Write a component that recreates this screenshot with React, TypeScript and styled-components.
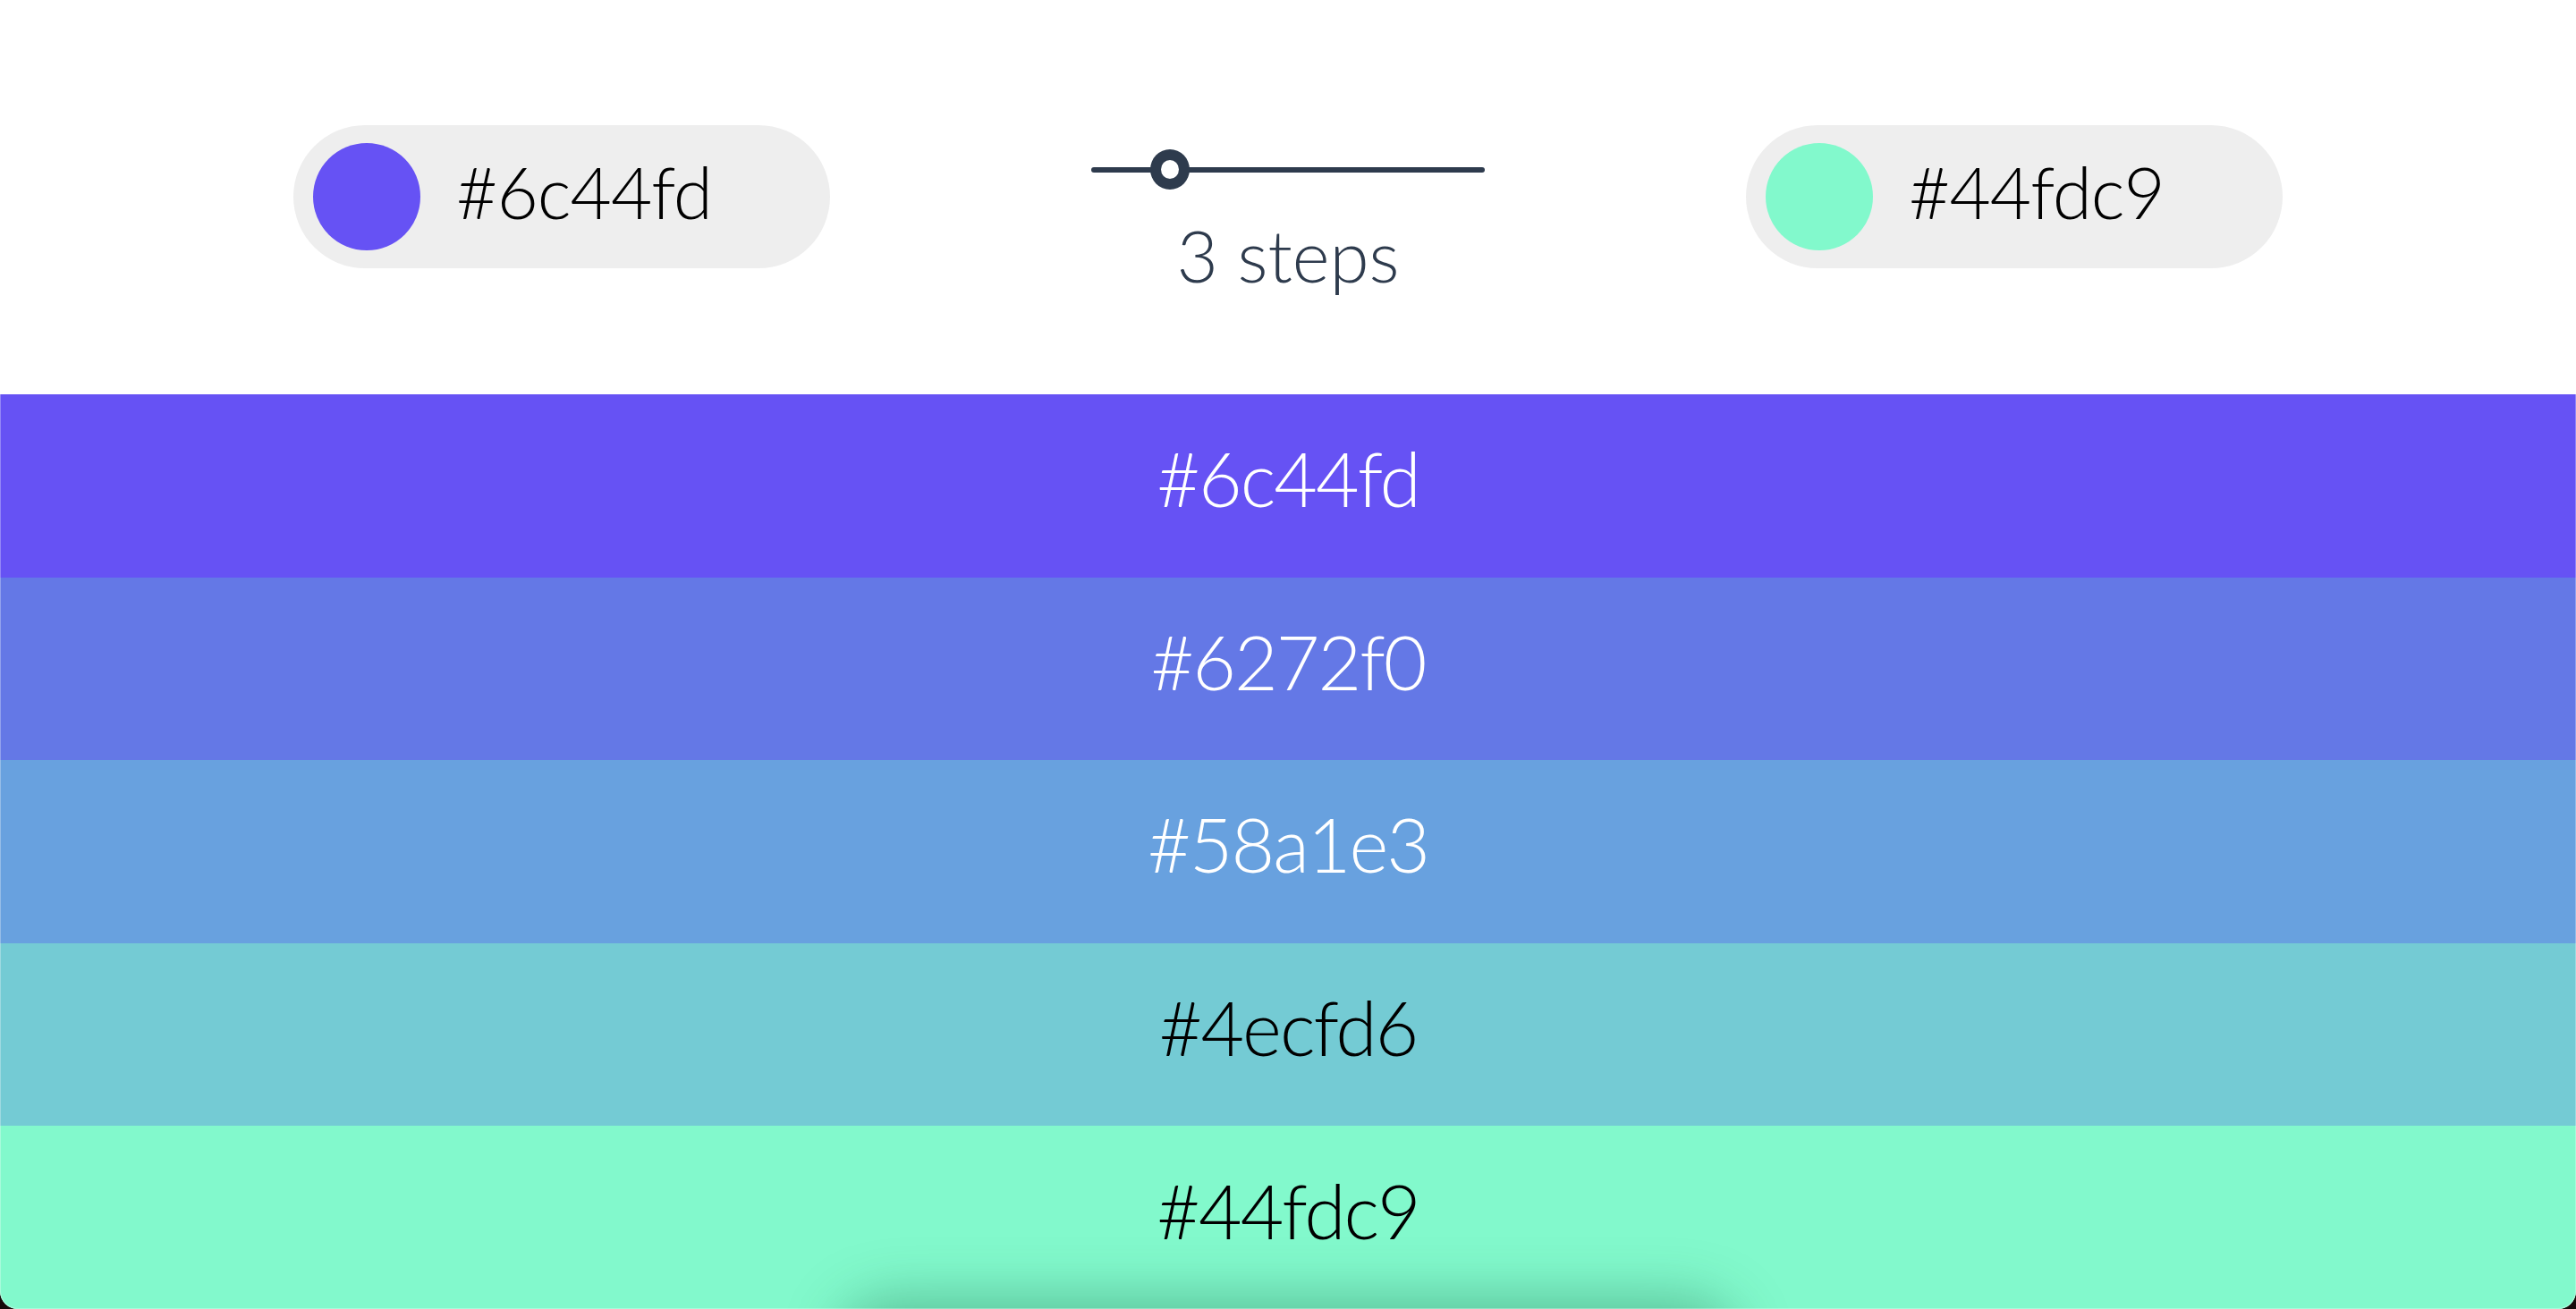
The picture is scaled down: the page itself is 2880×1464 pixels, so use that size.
import React from "react";
import styled, { createGlobalStyle } from "styled-components";

const GlobalStyle = createGlobalStyle`
  html, body {
    margin: 0;
    padding: 0;
    background: #170a0a;
  }
  * {
    box-sizing: border-box;
  }
`;

const START = { hex: "#6c44fd", shown: "#6652f4" };
const END = { hex: "#44fdc9", shown: "#82f9cc" };

const STEPS = [
  { hex: "#6c44fd", shown: "#6652f4", dark: false },
  { hex: "#6272f0", shown: "#6478e6", dark: false },
  { hex: "#58a1e3", shown: "#68a1df", dark: false },
  { hex: "#4ecfd6", shown: "#74cbd4", dark: true },
  { hex: "#44fdc9", shown: "#82f9cc", dark: true },
];

export default function App() {
  return (
    <>
      <GlobalStyle />
      <Window>
        <Header>
          <ColorPill>
            <Swatch $color={START.shown} />
            <PillLabel>{START.hex}</PillLabel>
          </ColorPill>
          <StepControl>
            <Slider>
              <Track />
              <Knob $pos={0.2} />
            </Slider>
            <StepLabel>3 steps</StepLabel>
          </StepControl>
          <ColorPill>
            <Swatch $color={END.shown} />
            <PillLabel>{END.hex}</PillLabel>
          </ColorPill>
        </Header>
        <Bands>
          {STEPS.map((s) => (
            <Band key={s.hex} $color={s.shown} $dark={s.dark}>
              {s.hex}
            </Band>
          ))}
        </Bands>
        <DockShadow />
      </Window>
    </>
  );
}

const Window = styled.div`
  position: relative;
  width: 2880px;
  height: 1464px;
  display: flex;
  flex-direction: column;
  background: #ffffff;
  border-radius: 0 0 20px 20px;
  overflow: hidden;
  font-family: Lato, "Noto Sans", sans-serif;

  &::after {
    content: "";
    position: absolute;
    inset: 0;
    border: 1px solid rgba(255, 255, 255, 0.3);
    border-top: none;
    border-radius: 0 0 20px 20px;
    pointer-events: none;
    z-index: 3;
  }
`;

const Header = styled.header`
  height: 441px;
  flex: none;
  display: flex;
  justify-content: center;
  align-items: flex-start;
  gap: 292px;
  padding-top: 140px;
`;

const ColorPill = styled.div`
  width: 600px;
  height: 160px;
  display: flex;
  align-items: center;
  gap: 40px;
  padding-left: 22px;
  border-radius: 80px;
  background: #eeeeee;
`;

const Swatch = styled.div<{ $color: string }>`
  width: 120px;
  height: 120px;
  border-radius: 50%;
  background: ${(p) => p.$color};
  flex: none;
`;

const PillLabel = styled.span`
  font-size: 80px;
  line-height: 80px;
  font-weight: 300;
  letter-spacing: -1px;
  color: #000000;
  padding-bottom: 12px;
`;

const StepControl = styled.div`
  width: 440px;
  margin-top: 27px;
  display: flex;
  flex-direction: column;
  align-items: center;
`;

const Slider = styled.div`
  position: relative;
  width: 100%;
  height: 45px;
  display: flex;
  align-items: center;
`;

const Track = styled.div`
  width: 100%;
  height: 6px;
  border-radius: 3px;
  background: #2e3b4d;
`;

const Knob = styled.div<{ $pos: number }>`
  position: absolute;
  top: 0;
  left: ${(p) => `calc(${p.$pos * 100}% - 22px)`};
  width: 44px;
  height: 45px;
  border-radius: 50%;
  border: 12px solid #2e3b4d;
  background: #ffffff;
`;

const StepLabel = styled.div`
  margin-top: 33px;
  font-size: 80px;
  line-height: 80px;
  font-weight: 300;
  color: #2e3b4d;
`;

const Bands = styled.main`
  flex: 1;
  display: flex;
  flex-direction: column;
`;

const Band = styled.div<{ $color: string; $dark: boolean }>`
  flex: 1;
  display: flex;
  align-items: center;
  justify-content: center;
  padding-bottom: 16px;
  background: ${(p) => p.$color};
  color: ${(p) => (p.$dark ? "#000000" : "#ffffff")};
  font-size: 84px;
  line-height: 84px;
  font-weight: 300;
  letter-spacing: -2px;
`;

const DockShadow = styled.div`
  position: absolute;
  left: 50%;
  bottom: -110px;
  width: 1000px;
  height: 110px;
  transform: translateX(-50%);
  border-radius: 55px;
  box-shadow: 0 -10px 64px rgba(10, 80, 50, 0.35);
  z-index: 2;
`;
